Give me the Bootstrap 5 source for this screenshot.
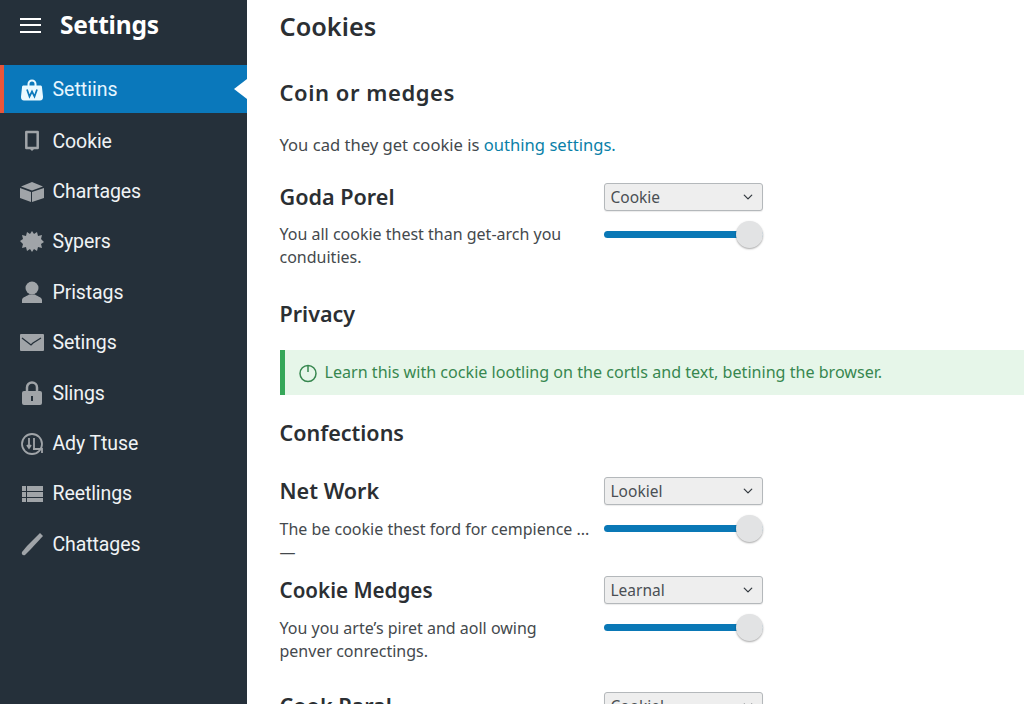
<!DOCTYPE html>
<html lang="en">
<head>
<meta charset="utf-8">
<title>Settings</title>
<link href="https://cdn.jsdelivr.net/npm/bootstrap@5.3.0/dist/css/bootstrap.min.css" rel="stylesheet">
<style>
html,body{height:704px;overflow:hidden;background:#fff}
body{font-family:"Noto Sans","Open Sans",sans-serif;color:#2b2f33}
.shell{height:704px;width:1024px}
.side{width:247px;flex:none;background:#25303a;font-family:Roboto,"Liberation Sans",sans-serif}
.side-top{height:65px;padding:0 0 15px 20px;gap:19px}
.side-top b{font-family:"Noto Sans",sans-serif;font-size:24.5px;font-weight:700;color:#fff;letter-spacing:-.2px}
.burger{width:21px;height:15px;border-top:2px solid #fff;border-bottom:2px solid #fff;position:relative}
.burger::after{content:"";position:absolute;left:0;right:0;top:4.5px;height:2px;background:#fff}
.side-item{height:50.4px;padding-left:20px;gap:8.5px;color:#f0f3f5;font-size:19.5px;letter-spacing:-.1px;text-decoration:none}
.side-item svg{width:24px;height:24px;flex:none;color:#a0a4a8}
.side-item.on{height:48px;margin-bottom:3px;background:#0a78bb;border-left:4px solid #e8563a;padding-left:16px;padding-top:2px;position:relative;color:#e6f6ff;letter-spacing:0}
.side-item.on svg{color:#eaf9ff}
.side-item.on::after{content:"";position:absolute;right:0;top:14px;border:10px solid transparent;border-left:0;border-right:13px solid #fff}
.pane{padding:0 0 0 32.5px;min-width:0;flex:1}
.h-page{font-size:25.3px;font-weight:600;margin:10px 0 0;line-height:33px;height:33px}
.h-sec{font-size:21.5px;font-weight:600;line-height:28px;margin:0}
.h-sec.wide{font-size:22px;letter-spacing:.55px;margin-top:35px}
.h-sec.privacy{margin-top:31px}
.h-sec.conf{margin-top:24px}
.h-item{font-size:21.6px;font-weight:600;line-height:28px;margin:0}
.h-item.tight{font-size:20.6px}
.t{font-size:16px;line-height:23px;color:#44494d;margin:0}
.t.big{font-size:16.6px;margin-top:27px}
.t a{color:#0a7fa8;text-decoration:none}
.gap-desc{margin-top:12px}
.gap-desc2{margin-top:13px}
.set{display:flex;width:483px;justify-content:space-between}
.set.s1{margin-top:27px}
.set.s2{margin-top:30px}
.set.s3{margin-top:12px}
.set.s4{margin-top:29px}
.set-l{width:296px}
.set-r{width:159px;flex:none}
.pick.form-select{height:28px;padding:0 0 0 6px;font-size:15.5px;line-height:26px;border-color:#b4b8bb;border-radius:3px;color:#4a4f54;background-color:#eeeeee;background-position:right 8px center;background-size:12px 10px;box-shadow:0 1px 1px rgba(0,0,0,.08)}
.slide.form-range{height:28px;display:block;margin-top:9px}
.slide::-webkit-slider-runnable-track{height:7px;border-radius:4px;background:#0a78b6}
.slide::-webkit-slider-thumb{width:27px;height:27px;margin-top:-10px;background:#e2e3e4;border-radius:50%;box-shadow:0 1px 2px rgba(0,0,0,.35);-webkit-appearance:none;appearance:none}
.note{height:45px;margin-top:22px;background:#e6f6e9;border-left:5px solid #36a759;padding-left:13px;gap:7px;color:#37874f;font-size:16.1px}
.note svg{width:20px;height:20px;flex:none}
</style>
</head>
<body>
<div class="shell d-flex">
<nav class="side">
 <div class="side-top d-flex align-items-center"><span class="burger"></span><b>Settings</b></div>
 <a class="side-item on d-flex align-items-center" href="#"><svg viewBox="0 0 24 24"><path fill="currentColor" d="M7.500 7.500V6a4.500 4.500 0 0 1 9 0v1.500H20c1.500 0 2 .5 2 2l1 9c.2 2.500-1 4-3 4H4c-2 0-3.200-1.500-3-4l1-9c0-1.500.5-2 2-2zm2 0h5V6a2.500 2.500 0 0 0-5 0z"/><path fill="none" stroke="#0a78bb" stroke-width="1.700" d="M7 11.500l2.500 7 2.500-5 2.500 5 2.500-7"/></svg>Settiins</a>
 <a class="side-item d-flex align-items-center" href="#"><svg viewBox="0 0 24 24"><path fill="none" stroke="currentColor" stroke-width="2.500" stroke-linejoin="round" d="M6.300 3h11.400v16H6.300z"/><path fill="currentColor" d="M9 19h6l-3 3z"/></svg>Cookie</a>
 <a class="side-item d-flex align-items-center" href="#"><svg viewBox="0 0 24 24"><path fill="currentColor" d="M12 2l11 4.500-11 4L1 6.500zM0 8l11 4v10L0 18zm24 0v10l-12 4V12z"/></svg>Chartages</a>
 <a class="side-item d-flex align-items-center" href="#"><svg viewBox="0 0 24 24"><path fill="currentColor" d="M12 1l2 3 3-2 1 4 4-1-1 4 3 3-3 2 1 4-4-1-1 4-3-2-2 3-2-3-3 2-1-4-4 1 1-4-3-3 3-2-1-4 4 1 1-4 3 2z"/></svg>Sypers</a>
 <a class="side-item d-flex align-items-center" href="#"><svg viewBox="0 0 24 24"><circle cx="12" cy="8" r="6.500" fill="currentColor"/><path fill="currentColor" d="M2 23v-3c0-3 6-4 7-5.500h6c1 1.500 7 2.500 7 5.500v3z"/></svg>Pristags</a>
 <a class="side-item d-flex align-items-center" href="#"><svg viewBox="0 0 24 24"><rect x="0" y="3" width="24" height="17" rx="1" fill="currentColor"/><path fill="none" stroke="#25303a" stroke-width="1.300" d="M2 7l9 7 2-2 8-5"/></svg>Setings</a>
 <a class="side-item d-flex align-items-center" href="#"><svg viewBox="0 0 24 24"><path fill="none" stroke="currentColor" stroke-width="2.500" d="M7 11V6.500a5 5 0 0 1 10 0V11"/><rect x="2" y="10" width="20" height="14" rx="2" fill="currentColor"/><rect x="11" y="15" width="2" height="5" fill="#25303a"/></svg>Slings</a>
 <a class="side-item d-flex align-items-center" href="#"><svg viewBox="0 0 24 24"><circle cx="12" cy="12" r="10" fill="none" stroke="currentColor" stroke-width="1.800"/><path fill="none" stroke="currentColor" stroke-width="1.800" d="M9 6v10M14 6v10M7 13l2 3 2-3M13 17h9v4"/></svg>Ady Ttuse</a>
 <a class="side-item d-flex align-items-center" href="#"><svg viewBox="0 0 24 24"><path fill="currentColor" d="M2 4h4v5H2zm5 0h16v5H7zM2 10h4v5H2zm5 0h16v5H7zM2 16h4v4H2zm5 0h16v4H7z"/></svg>Reetlings</a>
 <a class="side-item d-flex align-items-center" href="#"><svg viewBox="0 0 24 24"><path fill="currentColor" d="M20 1l3 3-13 14-5 5c-2 1-4-1-3-3l5-6z"/></svg>Chattages</a>
</nav>
<main class="pane">
 <h1 class="h-page">Cookies</h1>
 <h2 class="h-sec wide">Coin or medges</h2>
 <p class="t big">You cad they get cookie is <a href="#">outhing settings.</a></p>
 <div class="set s1">
  <div class="set-l"><h3 class="h-item">Goda Porel</h3><p class="t gap-desc">You all cookie thest than get-arch you conduities.</p></div>
  <div class="set-r"><select class="pick form-select"><option>Cookie</option></select><input class="slide form-range" type="range" value="100" aria-label="Goda Porel"></div>
 </div>
 <h2 class="h-sec privacy">Privacy</h2>
 <div class="note d-flex align-items-center"><svg viewBox="0 0 20 20" fill="none" stroke="currentColor" stroke-width="1.500"><circle cx="10" cy="10.500" r="8"/><path d="M10 3v6"/></svg>Learn this with cockie lootling on the cortls and text, betining the browser.</div>
 <h2 class="h-sec conf">Confections</h2>
 <div class="set s2">
  <div class="set-l"><h3 class="h-item">Net Work</h3><p class="t gap-desc2 text-nowrap">The be cookie thest ford for cempience ...</p><p class="t">—</p></div>
  <div class="set-r"><select class="pick form-select"><option>Lookiel</option></select><input class="slide form-range" type="range" value="100" aria-label="Net Work"></div>
 </div>
 <div class="set s3">
  <div class="set-l"><h3 class="h-item tight">Cookie Medges</h3><p class="t gap-desc2">You you arte’s piret and aoll owing penver conrectings.</p></div>
  <div class="set-r"><select class="pick form-select"><option>Learnal</option></select><input class="slide form-range" type="range" value="100" aria-label="Cookie Medges"></div>
 </div>
 <div class="set s4">
  <div class="set-l"><h3 class="h-item">Cook Paral</h3></div>
  <div class="set-r"><select class="pick form-select"><option>Cookiel</option></select></div>
 </div>
</main>
</div>
</body>
</html>
